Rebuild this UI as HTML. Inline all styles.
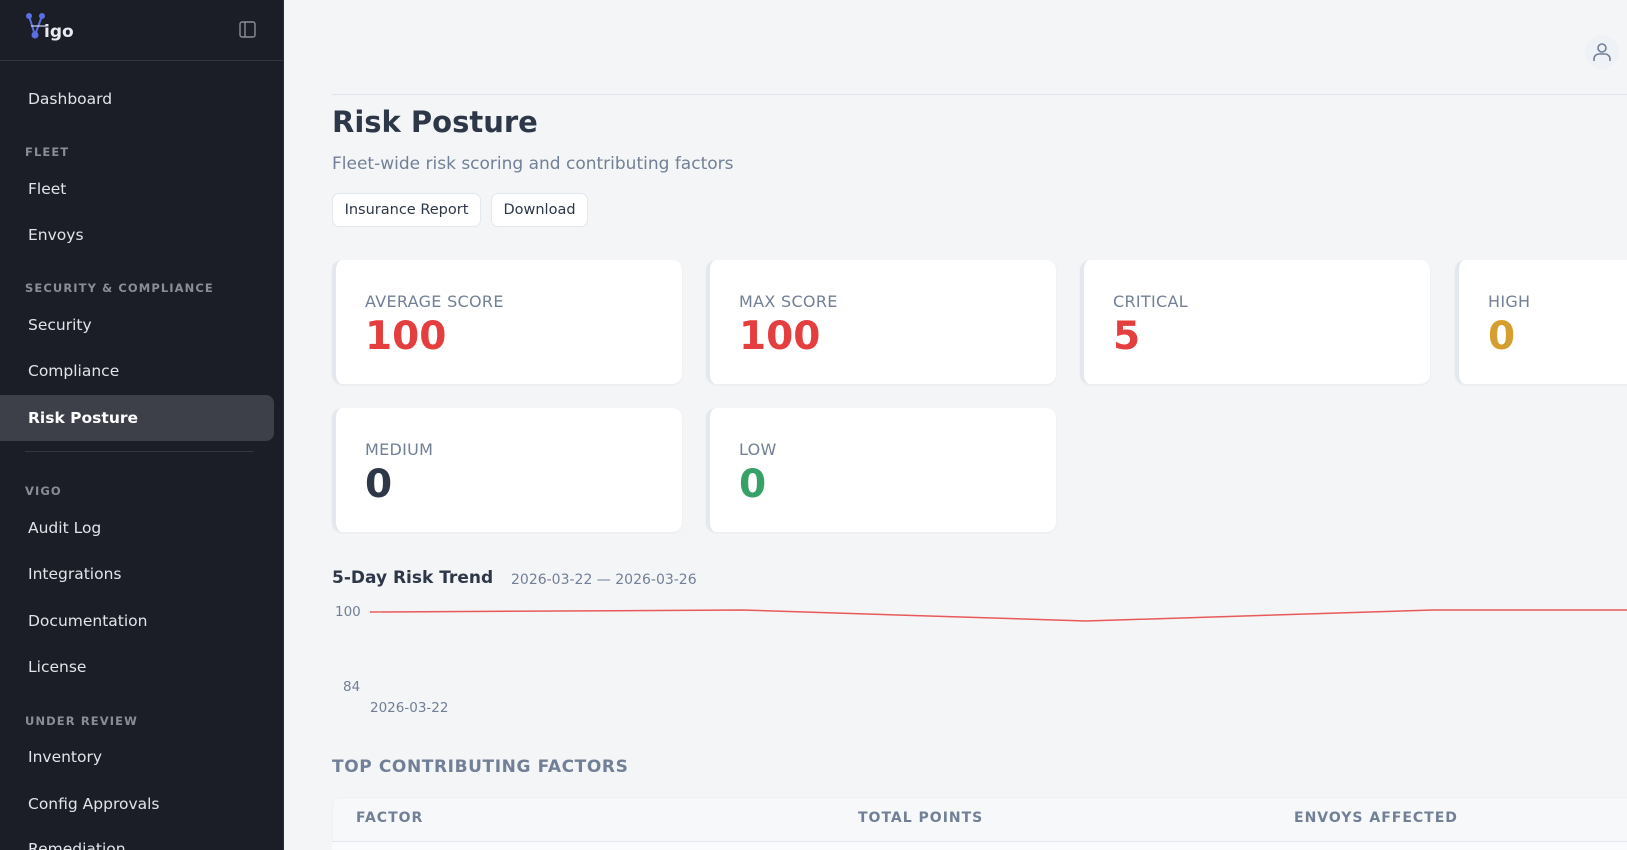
<!DOCTYPE html>
<html style="width:1627px;height:850px;overflow:hidden;background:#f4f5f7"><head><meta charset="utf-8"><style>
*{box-sizing:border-box;margin:0;padding:0}
body{width:1627px;height:850px;overflow:hidden;background:#f4f5f7;font-family:"DejaVu Sans","Liberation Sans",sans-serif;position:relative}
.sb{position:absolute;left:0;top:0;width:284px;height:850px;background:#1b1e26;border-right:1px solid #2a2d35}
.sb .hd{height:61px;border-bottom:1px solid #33363e;position:relative}
.sb .it{position:absolute;left:28px;font-size:15.5px;color:#e2e4ea;transform:translateY(-50%)}
.sb .sec{position:absolute;left:25px;font-size:11.5px;font-weight:bold;color:#8a8d96;letter-spacing:1.1px;transform:translateY(-50%)}
.act{position:absolute;left:0;top:395px;width:274px;height:46px;background:#3d4049;border-radius:0 8px 8px 0}
.t{position:absolute;white-space:nowrap}
.card{position:absolute;width:350px;height:124px;background:#fff;border-radius:10px;border-left:4px solid #e3e8ef;box-shadow:0 1px 2px rgba(0,0,0,.05)}
.card .l{position:absolute;left:29px;top:32px;font-size:16px;color:#718096;letter-spacing:.3px}
.card .n{position:absolute;left:29px;top:54px;font-size:39px;font-weight:bold}
.btn{position:absolute;top:193px;height:34px;background:#fff;border:1px solid #e2e8f0;border-radius:7px;font-size:14.5px;color:#2d3748;line-height:32px;text-align:center}
</style></head><body>
<div class="sb">
 <div class="hd">
  <svg style="position:absolute;left:25px;top:13px" width="26" height="28" viewBox="0 0 26 28"><g stroke="#5a6fe0" stroke-width="2" fill="#5a6fe0"><line x1="4" y1="3" x2="10" y2="22"/><line x1="17" y1="3" x2="10" y2="22"/><line x1="6" y1="13" x2="21" y2="13" stroke="#cfd4f5" stroke-width="1.2"/><circle cx="4" cy="3" r="2"/><circle cx="17" cy="3" r="2"/><circle cx="10" cy="22" r="2.5"/></g></svg>
  <div class="t" style="left:44px;top:22px;font-size:17px;font-weight:bold;color:#e8eaf0">igo</div>
  <svg style="position:absolute;left:239px;top:21px" width="17" height="17" viewBox="0 0 17 17"><rect x="1" y="1" width="15" height="15" rx="2" fill="none" stroke="#8a8d96" stroke-width="1.4"/><line x1="6" y1="1" x2="6" y2="16" stroke="#8a8d96" stroke-width="1.4"/></svg>
 </div>
 <div class="act"></div>
 <div class="it" style="top:99px">Dashboard</div>
 <div class="sec" style="top:152px">FLEET</div>
 <div class="it" style="top:189px">Fleet</div>
 <div class="it" style="top:235px">Envoys</div>
 <div class="sec" style="top:288px">SECURITY &amp; COMPLIANCE</div>
 <div class="it" style="top:325px">Security</div>
 <div class="it" style="top:371px">Compliance</div>
 <div class="it" style="top:418px;font-weight:bold;color:#fff">Risk Posture</div>
 <div style="position:absolute;left:25px;top:451px;width:229px;height:1px;background:#33363e"></div>
 <div class="sec" style="top:491px">VIGO</div>
 <div class="it" style="top:528px">Audit Log</div>
 <div class="it" style="top:574px">Integrations</div>
 <div class="it" style="top:621px">Documentation</div>
 <div class="it" style="top:667px">License</div>
 <div class="sec" style="top:721px">UNDER REVIEW</div>
 <div class="it" style="top:757px">Inventory</div>
 <div class="it" style="top:804px">Config Approvals</div>
 <div class="it" style="top:849px">Remediation</div>
</div>
<div style="position:absolute;left:332px;top:94px;width:1295px;height:1px;background:#dfe5ec"></div>
<div style="position:absolute;left:1585px;top:35px;width:34px;height:34px;border-radius:50%;background:#eef1f5"></div>
<svg style="position:absolute;left:1592px;top:42px" width="20" height="20" viewBox="0 0 20 20" fill="none" stroke="#718096" stroke-width="1.6"><circle cx="10" cy="6" r="4"/><path d="M2 19v-2a5 5 0 0 1 5-5h6a5 5 0 0 1 5 5v2"/></svg>
<div class="t" style="left:332px;top:105px;font-size:29px;font-weight:bold;color:#2d3748">Risk Posture</div>
<div class="t" style="left:332px;top:154px;font-size:17px;color:#718096">Fleet-wide risk scoring and contributing factors</div>
<div class="btn" style="left:332px;width:149px">Insurance Report</div>
<div class="btn" style="left:491px;width:97px">Download</div>
<div class="card" style="left:332px;top:260px"><div class="l">AVERAGE SCORE</div><div class="n" style="color:#e53e3e">100</div></div>
<div class="card" style="left:706px;top:260px"><div class="l">MAX SCORE</div><div class="n" style="color:#e53e3e">100</div></div>
<div class="card" style="left:1080px;top:260px"><div class="l">CRITICAL</div><div class="n" style="color:#e53e3e">5</div></div>
<div class="card" style="left:1455px;top:260px"><div class="l">HIGH</div><div class="n" style="color:#d69e2e">0</div></div>
<div class="card" style="left:332px;top:408px"><div class="l">MEDIUM</div><div class="n" style="color:#2d3748">0</div></div>
<div class="card" style="left:706px;top:408px"><div class="l">LOW</div><div class="n" style="color:#38a169">0</div></div>
<div class="t" style="left:332px;top:568px;font-size:17px;font-weight:bold;color:#2d3748">5-Day Risk Trend</div>
<div class="t" style="left:511px;top:572px;font-size:14px;color:#718096">2026-03-22 — 2026-03-26</div>
<div class="t" style="left:335px;top:604px;font-size:13.5px;color:#718096">100</div>
<div class="t" style="left:343px;top:679px;font-size:13.5px;color:#718096">84</div>
<div class="t" style="left:370px;top:700px;font-size:13.5px;color:#718096">2026-03-22</div>
<svg style="position:absolute;left:0;top:0" width="1627" height="850"><polyline points="370,612 742,610 1086,621 1433,610 1627,610" fill="none" stroke="#e53e3e" stroke-width="1.5" opacity=".85"/></svg>
<div class="t" style="left:332px;top:757px;font-size:17px;font-weight:bold;color:#718096;letter-spacing:.6px">TOP CONTRIBUTING FACTORS</div>
<div style="position:absolute;left:332px;top:797px;width:1295px;height:53px;background:#f7f8fa;border-radius:8px 0 0 0;border-left:1px solid #eef0f3;border-top:1px solid #eef0f3"></div>
<div style="position:absolute;left:332px;top:841px;width:1295px;height:1px;background:#e2e8f0"></div>
<div style="position:absolute;left:332px;top:842px;width:1295px;height:8px;background:#fafbfc"></div>
<div class="t" style="left:356px;top:810px;font-size:14px;font-weight:bold;color:#718096;letter-spacing:1px">FACTOR</div>
<div class="t" style="left:858px;top:810px;font-size:14px;font-weight:bold;color:#718096;letter-spacing:1px">TOTAL POINTS</div>
<div class="t" style="left:1294px;top:810px;font-size:14px;font-weight:bold;color:#718096;letter-spacing:1px">ENVOYS AFFECTED</div>
</body></html>
